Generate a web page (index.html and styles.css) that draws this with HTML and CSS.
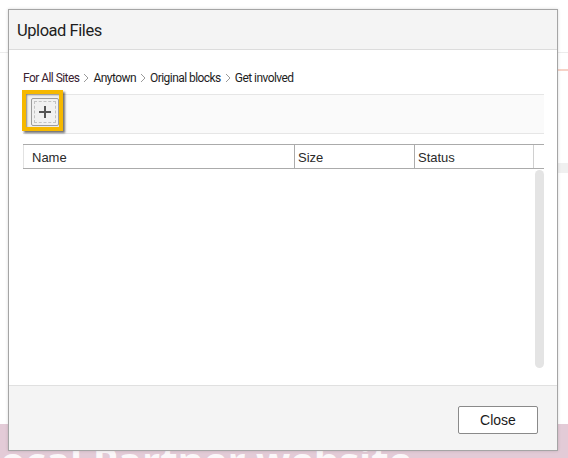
FILE: index.html
```html
<!DOCTYPE html>
<html>
<head>
<meta charset="utf-8">
<link rel="stylesheet" href="styles.css">
</head>
<body>
<div class="page">
  <div class="page-top"></div>
  <div class="page-side">
    <div class="side-accent"></div>
    <div class="side-bar"></div>
  </div>
  <div class="page-fill"></div>
  <div class="hero"><span class="hero-text">Local Partner website</span></div>
</div>

<div class="dialog">
  <div class="dlg-header">
    <span class="dlg-title">Upload Files</span>
  </div>
  <div class="dlg-body">
    <div class="crumbs">
      <span>For All Sites</span>
      <svg class="sep" width="8" height="10" viewBox="0 0 8 10"><path d="M2 1 L6 5 L2 9" fill="none" stroke="#9a9a9a" stroke-width="1"/></svg>
      <span>Anytown</span>
      <svg class="sep" width="8" height="10" viewBox="0 0 8 10"><path d="M2 1 L6 5 L2 9" fill="none" stroke="#9a9a9a" stroke-width="1"/></svg>
      <span>Original blocks</span>
      <svg class="sep" width="8" height="10" viewBox="0 0 8 10"><path d="M2 1 L6 5 L2 9" fill="none" stroke="#9a9a9a" stroke-width="1"/></svg>
      <span>Get involved</span>
    </div>
    <div class="toolbar">
      <div class="focus-ring">
        <button class="add-btn" type="button" aria-label="Add files">
          <span class="add-inner">
            <svg width="12" height="12" viewBox="0 0 12 12"><path d="M6 0 V12 M0 6 H12" stroke="#555" stroke-width="2"/></svg>
          </span>
        </button>
      </div>
    </div>
    <div class="grid">
      <div class="grid-head">
        <div class="col col-name">Name</div>
        <div class="col col-size">Size</div>
        <div class="col col-status">Status</div>
        <div class="col col-pad"></div>
      </div>
      <div class="grid-body">
        <div class="grid-rows"></div>
        <div class="scroll-track"><div class="scroll-thumb"></div></div>
      </div>
    </div>
  </div>
  <div class="dlg-footer">
    <button class="close-btn" type="button">Close</button>
  </div>
</div>
</body>
</html>
```

FILE: styles.css
```css
html, body {
  margin: 0;
  padding: 0;
}
body {
  width: 568px;
  height: 458px;
  overflow: hidden;
  background: #ffffff;
  font-family: Roboto, "Liberation Sans", Arial, sans-serif;
  position: relative;
}

/* background page */
.page {
  height: 458px;
  display: flex;
  flex-direction: column;
}
.page-top {
  height: 52px;
  border-bottom: 1px solid #ececec;
  flex: none;
}
.page-side {
  height: 120px;
  display: flex;
  flex-direction: column;
  align-items: flex-end;
  flex: none;
}
.side-accent {
  margin-top: 16px;
  width: 12px;
  height: 2px;
  background: #f6d3c8;
}
.side-bar {
  margin-top: 92px;
  width: 12px;
  height: 14px;
  background: #f0f0f0;
}
.page-fill {
  flex: 1;
}
.hero {
  height: 34px;
  flex: none;
  background: #e3cbd7;
  overflow: hidden;
  white-space: nowrap;
}
.hero-text {
  display: block;
  margin-left: -22px;
  margin-top: 17px;
  font-family: "Open Sans", sans-serif;
  font-weight: 700;
  font-size: 40px;
  line-height: 40px;
  color: #fbf7f9;
}

/* dialog overlay */
.dialog {
  position: absolute;
  left: 8px;
  top: 9px;
  width: 548px;
  height: 440px;
  border: 1px solid #a5a5a5;
  background: #ffffff;
  box-shadow: 0 0 3px rgba(0,0,0,0.15);
  display: flex;
  flex-direction: column;
}
.dlg-header {
  height: 39px;
  flex: none;
  background: #f4f4f4;
  border-bottom: 1px solid #dcdcdc;
  display: flex;
  align-items: center;
  padding-left: 8px;
}
.dlg-title {
  font-size: 16.5px;
  letter-spacing: -0.45px;
  color: #1e1e1e;
  padding-top: 2px;
}
.dlg-body {
  flex: 1;
  padding: 20px 13px 0 14px;
  display: flex;
  flex-direction: column;
  min-height: 0;
}
.crumbs {
  display: flex;
  align-items: center;
  font-size: 12px;
  line-height: 16px;
  color: #1e1e1e;
  gap: 2px;
  letter-spacing: -0.55px;
}
.crumbs .sep {
  margin: 0 1px;
}
.crumbs span:first-child {
  color: #3a2130;
}
.toolbar {
  margin-top: 8px;
  height: 38px;
  flex: none;
  background: #fafafa;
  border-top: 1px solid #e6e6e6;
  border-bottom: 1px solid #e6e6e6;
  display: flex;
  align-items: flex-start;
}
.focus-ring {
  margin: -5px 0 0 -1px;
  border: 4px solid #f6b800;
  background: #f1f1f1;
  box-shadow: 2px 2px 2px rgba(0,0,0,0.55), inset 1px 1px 2px rgba(0,0,0,0.45);
  display: flex;
  align-items: flex-start;
  padding: 4px 0 0 5px;
  box-sizing: content-box;
  width: 28px;
  height: 29px;
}
.add-btn {
  width: 28px;
  height: 28px;
  padding: 0;
  margin: 0;
  border: 1px solid #9c9c9c;
  border-radius: 2px;
  background: #f1f1f1;
  display: flex;
  align-items: center;
  justify-content: center;
}
.add-inner {
  width: 20px;
  height: 20px;
  border: 1px dashed #c3c3c3;
  display: flex;
  align-items: center;
  justify-content: center;
}
.grid {
  margin-top: 10px;
  flex: 1;
  display: flex;
  flex-direction: column;
  min-height: 0;
}
.grid-head {
  height: 23px;
  flex: none;
  border-top: 1px solid #ababab;
  border-bottom: 1px solid #ababab;
  display: grid;
  grid-template-columns: 271px 120px 119px 10px;
  font-family: "Liberation Sans", Arial, sans-serif;
  font-size: 13px;
  color: #2a2a2a;
}
.col {
  display: flex;
  align-items: center;
  padding-left: 9px;
  padding-top: 1px;
}
.col-name {
  border-left: 1px solid #e2e2e2;
  padding-left: 8px;
}
.col-size, .col-status {
  border-left: 1px solid #ababab;
  padding-left: 3px;
}
.col-pad {
  border-left: 1px solid #d0d0d0;
  padding: 0;
}
.grid-body {
  flex: 1;
  display: flex;
  padding-bottom: 16px;
}
.grid-rows {
  flex: 1;
}
.scroll-track {
  width: 9px;
  padding-top: 1px;
  display: flex;
}
.scroll-thumb {
  width: 9px;
  height: 198px;
  border-radius: 5px;
  background: #e4e4e4;
}
.dlg-footer {
  height: 65px;
  flex: none;
  background: #f4f4f4;
  border-top: 1px solid #e0e0e0;
  display: flex;
  justify-content: flex-end;
  align-items: flex-start;
  padding: 20px 19px 0 0;
  box-sizing: border-box;
}
.close-btn {
  width: 80px;
  height: 28px;
  background: #ffffff;
  border: 1px solid #8a8a8a;
  border-radius: 2px;
  font-family: "Liberation Sans", Arial, sans-serif;
  font-size: 14px;
  color: #1a1a1a;
  padding: 0;
}
```
